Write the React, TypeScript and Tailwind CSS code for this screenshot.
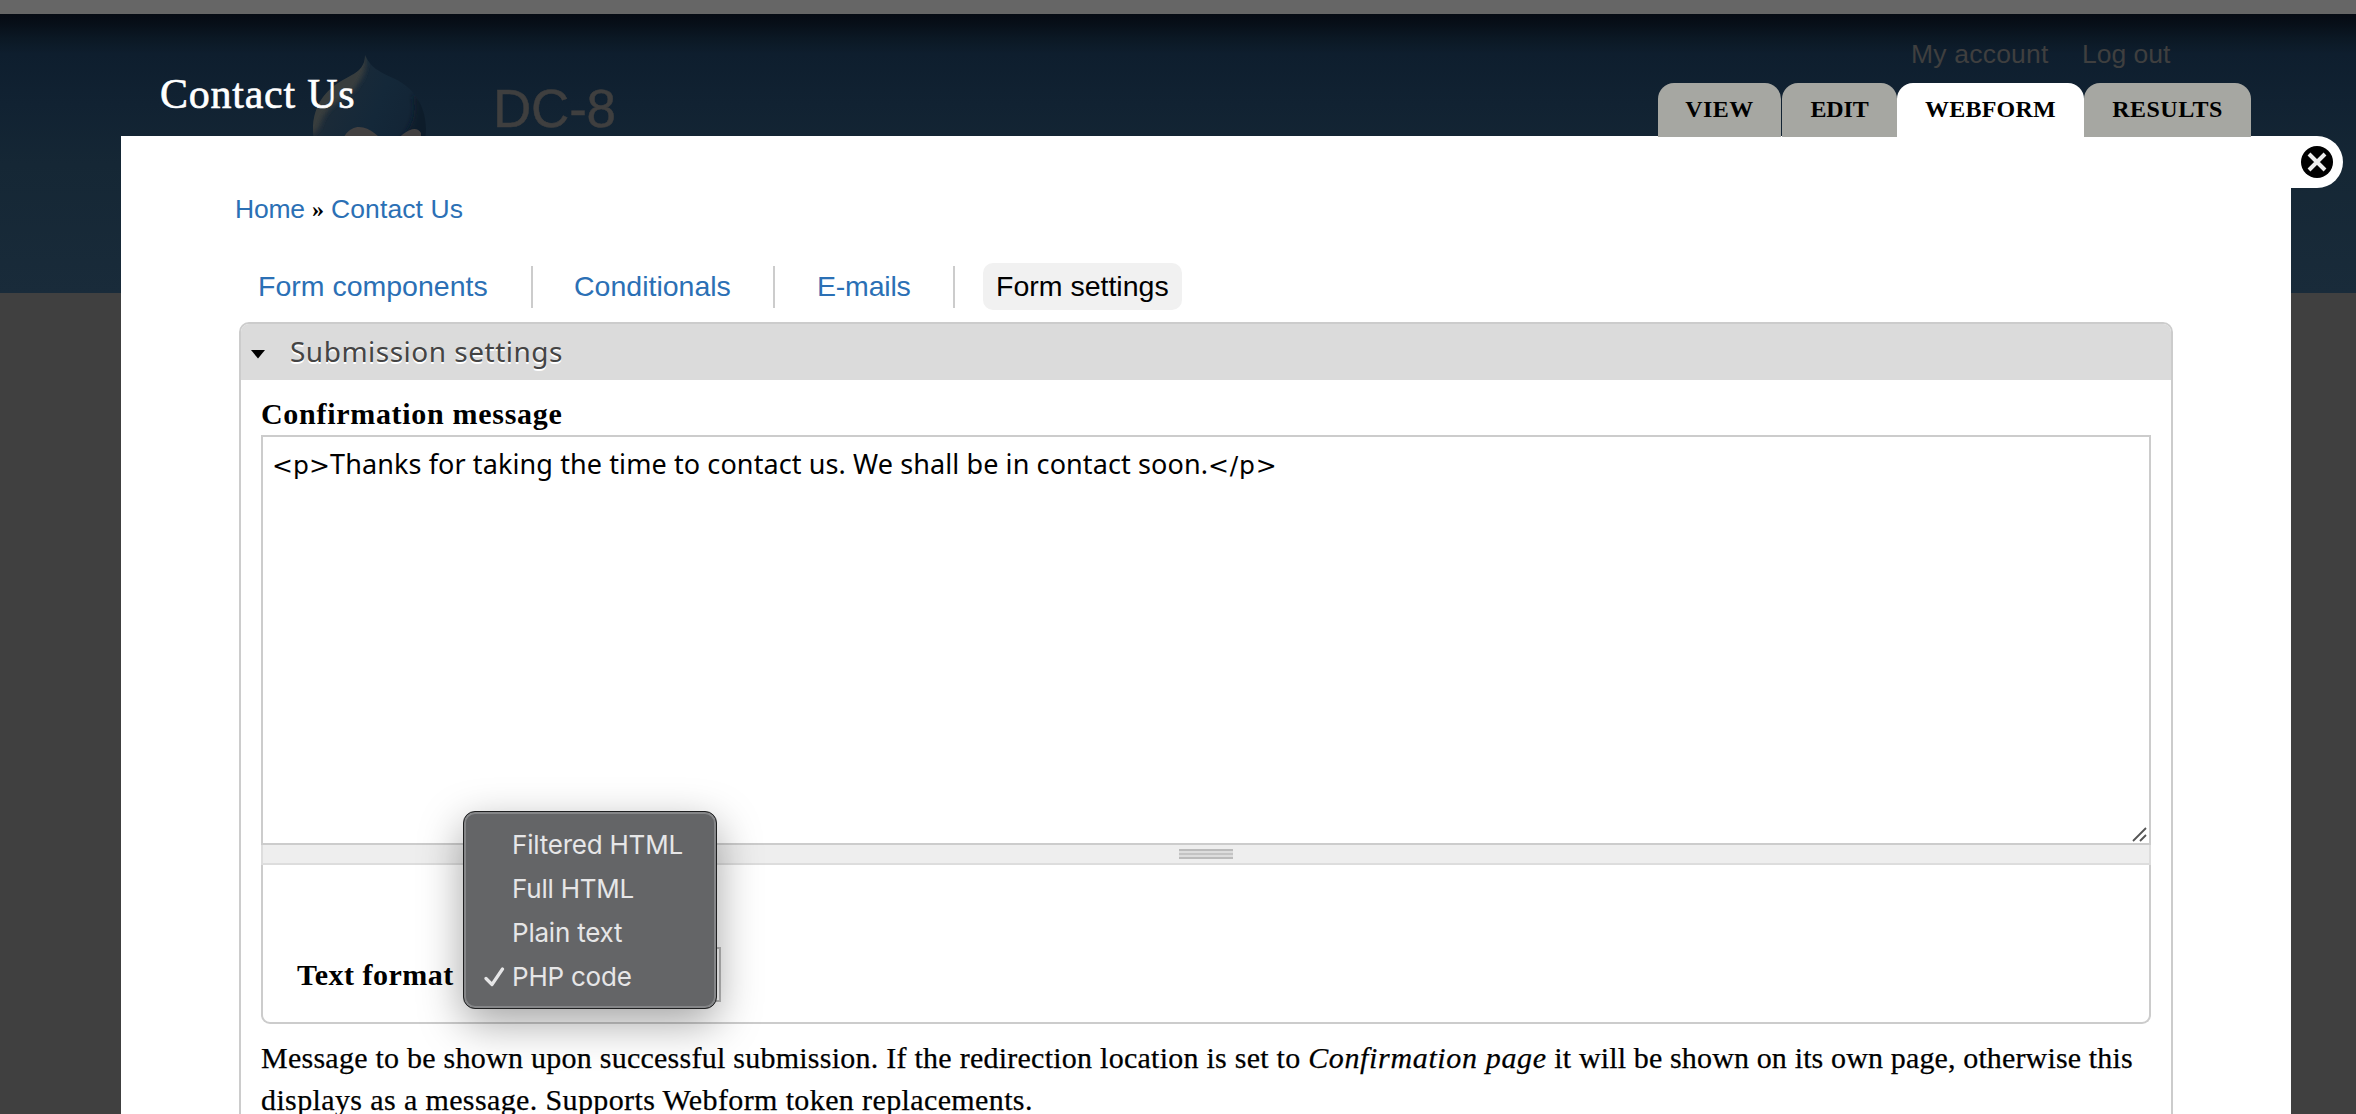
const primaryTabs = [
  { label: "VIEW", box: "w-[123px] mr-px bg-[#a6a7a2] tracking-[0.44px]" },
  { label: "EDIT", box: "w-[115px] bg-[#a6a7a2] tracking-[-0.2px]" },
  { label: "WEBFORM", box: "w-[187px] bg-white tracking-[0.22px]" },
  { label: "RESULTS", box: "w-[167px] bg-[#a6a7a2] tracking-[0.5px]" },
];

const formats = ["Filtered HTML", "Full HTML", "Plain text", "PHP code"];

function DrupalDrop() {
  return (
    <svg className="absolute left-[308px] top-[38px]" width="124" height="130" viewBox="0 0 124 130">
      <defs>
        <linearGradient id="body" x1="0" y1="0.2" x2="1" y2="0.6">
          <stop offset="0" stopColor="#303438" />
          <stop offset="0.3" stopColor="#1a2a38" />
          <stop offset="0.6" stopColor="#142839" />
          <stop offset="1" stopColor="#122334" />
        </linearGradient>
        <filter id="soft" x="-20%" y="-20%" width="140%" height="140%">
          <feGaussianBlur stdDeviation="2.5" />
        </filter>
        <clipPath id="drop">
          <path d="M57 17C57 31 48 35 35 42C17 52 5 68 5 92C5 115 20 130 60 130C100 130 118 115 118 91C118 66 104 49 87 41C70 33 63 30 57 17Z" />
        </clipPath>
      </defs>
      <g clipPath="url(#drop)">
        <rect width="124" height="130" fill="url(#body)" />
        <path d="M57 15C60 34 54 40 47 51C37 62 18 65 11 90L0 100V40Z" fill="#393c3e" filter="url(#soft)" />
        <path d="M105 58C111 80 100 98 80 115L124 130V60Z" fill="#0e1b29" filter="url(#soft)" />
        <path d="M31 130C29 98 42 89 51 89C63 89 70 99 83 109C95 93 108 86 113 95L113 130Z" fill="#434141" />
      </g>
    </svg>
  );
}

function DimmedPage() {
  return (
    <div className="absolute inset-0 bg-[#404040] font-['Liberation_Sans',sans-serif] text-[#3f3f3f]">
      <div className="h-[14px] bg-[#666]" />
      <div className="h-[279px] bg-[linear-gradient(to_bottom,#060b13_0px,#070e17_8px,#0b1824_24px,#0e1e2e_40px,#112232_90px,#152735_150px,#192b3a_279px)]" />
      <DrupalDrop />
      <div className="absolute left-[493px] top-[79px] text-[53px] leading-[60px] tracking-[-0.2px] [-webkit-text-stroke:0.5px_#3f3f3f]">
        DC-8
      </div>
      <div className="absolute left-[1911px] top-[39px] flex gap-[34px] text-[26.5px] leading-[30px]">
        <span className="w-[137px] whitespace-nowrap tracking-[0.2px]">My account</span>
        <span>Log out</span>
      </div>
    </div>
  );
}

function FormatMenu() {
  return (
    <div className="absolute -left-[3px] -top-[138px] z-10 h-[198px] w-[254px] rounded-[12px] border border-[#1f2021] bg-[#646567] pt-[11px] shadow-[inset_0_0_0_2px_#858688,0_14px_44px_rgba(0,0,0,0.36)]">
      {formats.map((f) => (
        <div
          key={f}
          className="flex h-[44px] items-center font-['Inter',sans-serif] text-[26px] leading-[44px] tracking-[-0.22px] text-[#e6e6e7]"
        >
          <span className="flex w-[48px] justify-end pr-[7px]">
            {f === "PHP code" && (
              <svg width="21" height="20" viewBox="0 0 21 20" fill="none" stroke="#e6e6e7" strokeWidth="3.2">
                <path d="M2 11.5L8 17.5L18.5 2" strokeLinecap="round" strokeLinejoin="round" />
              </svg>
            )}
          </span>
          {f}
        </div>
      ))}
    </div>
  );
}

export default function App() {
  return (
    <div className="relative h-[1114px] w-[2356px] overflow-hidden">
      <DimmedPage />
      <div className="relative ml-[121px] w-[2170px] font-['Liberation_Serif',serif] text-black">
        <header className="flex h-[136px] justify-between pl-[39px] pr-[40px]">
          <h1 className="mt-[70px] text-[42px] leading-[48px] tracking-[0.75px] text-white [-webkit-text-stroke:0.6px_#fff]">
            Contact Us
          </h1>
          <nav className="relative z-10 mt-[83px] flex h-[54px]">
            {primaryTabs.map((t) => (
              <div
                key={t.label}
                className={"rounded-t-[16px] pt-[12px] text-center text-[24px] font-bold leading-[28px] " + t.box}
              >
                {t.label}
              </div>
            ))}
          </nav>
        </header>

        <main className="relative h-[1100px] bg-white pt-[58px]">
          <button className="absolute -right-[52px] top-0 flex h-[52px] w-[52px] items-center justify-center rounded-r-[26px] bg-white">
            <svg width="34" height="34" viewBox="0 0 34 34">
              <circle cx="17" cy="17" r="16" fill="#000" />
              <path d="M9 9L25 25M25 9L9 25" stroke="#eee" strokeWidth="4" />
            </svg>
          </button>

          <div className="ml-[114px] flex h-[30px] font-['Liberation_Sans',sans-serif] text-[26.5px] leading-[30px] text-[#2b70b5]">
            <span className="w-[70px] tracking-[-0.2px]">Home</span>
            <span className="w-[26px] text-center font-['Liberation_Serif',serif] text-[24px] font-bold text-black">»</span>
            <span className="tracking-[0.1px]">Contact Us</span>
          </div>

          <nav className="ml-[137px] mt-[39px] flex h-[47px] font-['Liberation_Sans',sans-serif] text-[28.5px] leading-[34px] text-[#2b70b5]">
            <span className="mt-[3px] h-[42px] w-[275px] border-r-2 border-[#ccc] pt-[3px]">Form components</span>
            <span className="mt-[3px] h-[42px] w-[242px] border-r-2 border-[#ccc] pl-[41px] pt-[3px]">Conditionals</span>
            <span className="mt-[3px] h-[42px] w-[180px] border-r-2 border-[#ccc] pl-[42px] pt-[3px] tracking-[-0.2px]">E-mails</span>
            <span className="ml-[28px] h-[47px] w-[199px] rounded-[10px] bg-[#f1f1f1] pl-[13px] pt-[6px] text-black">
              Form settings
            </span>
          </nav>

          <section className="ml-[118px] mt-[12px] h-[900px] w-[1934px] rounded-[10px] border-2 border-[#ccc]">
            <div className="flex h-[56px] items-center rounded-t-[8px] bg-[#dbdbdb] pb-[3px] pl-[10px]">
              <svg className="mt-[8px]" width="14" height="9" viewBox="0 0 14 9">
                <path d="M0 0H14L7 8.5Z" fill="#000" />
              </svg>
              <span className="ml-[25px] font-['Noto_Sans',sans-serif] text-[28px] leading-[38px] tracking-[0.5px] text-[#444] [text-shadow:0_2px_0_#fff]">
                Submission settings
              </span>
            </div>

            <div className="px-[20px] pt-[17px]">
              <div className="text-[30px] font-bold leading-[34px] tracking-[0.7px]">Confirmation message</div>
              <div className="relative mt-[4px] h-[410px] border-2 border-[#ccc] bg-white pl-[9px] pt-[9px] font-['Noto_Sans',sans-serif] text-[27px] leading-[36px] tracking-[0.1px]">
                <span className="font-['DejaVu_Sans',sans-serif] text-[25px]">{"<p>"}</span>
                Thanks for taking the time to contact us. We shall be in contact soon.
                <span className="font-['DejaVu_Sans',sans-serif] text-[25px] tracking-[0.8px]">{"</p>"}</span>
                <svg className="absolute bottom-px right-px" width="16" height="15" viewBox="0 0 16 15" stroke="#555" strokeWidth="1.8">
                  <path d="M1 14L14 1M8 14L14 8" />
                </svg>
              </div>
              <div className="flex h-[20px] justify-center border-x-2 border-b-2 border-[#ddd] bg-[#eee] pt-[4px]">
                <div className="flex h-[10px] w-[54px] flex-col justify-between border-y-2 border-[#bbb] bg-[#ddd] py-[2px]">
                  <div className="h-[2px] bg-[#c4c4c4]" />
                </div>
              </div>
              <div className="h-[159px] rounded-b-[9px] border-2 border-t-0 border-[#ccc] pl-[34px] pt-[82px]">
                <div className="flex h-[55px] items-center">
                  <span className="w-[167px] text-[30px] font-bold leading-[34px] tracking-[0.5px]">Text format</span>
                  <div className="relative h-[55px] w-[257px] border-2 border-[#bbb] bg-white">
                    <FormatMenu />
                  </div>
                </div>
              </div>
              <div className="mt-[13px] whitespace-nowrap text-[30px] leading-[42px] [-webkit-text-stroke:0.25px_#000]">
                <div className="tracking-[0.25px]">
                  Message to be shown upon successful submission. If the redirection location is set to{" "}
                  <em className="tracking-[0.65px]">Confirmation page</em>
                  <span className="tracking-[0.14px]"> it will be shown on its own page, otherwise this</span>
                </div>
                <div className="tracking-[0.38px]">displays as a message. Supports Webform token replacements.</div>
              </div>
            </div>
          </section>
        </main>
      </div>
    </div>
  );
}
